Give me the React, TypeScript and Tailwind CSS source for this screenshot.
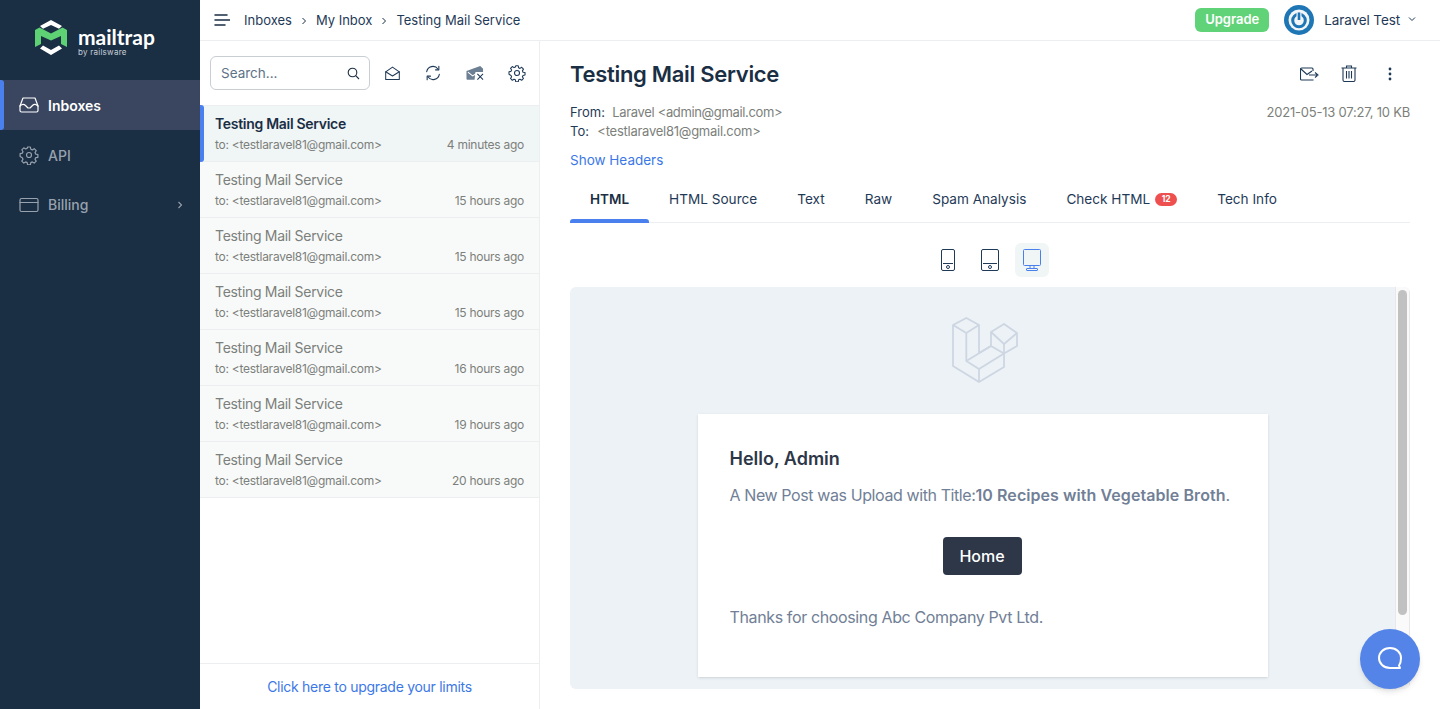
import { ReactNode } from "react";

const FONT = "font-['Inter','Liberation_Sans',sans-serif]";

const messages = [
  { time: "4 minutes ago", active: true },
  { time: "15 hours ago" },
  { time: "15 hours ago" },
  { time: "15 hours ago" },
  { time: "16 hours ago" },
  { time: "19 hours ago" },
  { time: "20 hours ago" },
];

const tabs = [
  { label: "HTML", active: true },
  { label: "HTML Source" },
  { label: "Text" },
  { label: "Raw" },
  { label: "Spam Analysis" },
  { label: "Check HTML", badge: "12" },
  { label: "Tech Info" },
];

function Icon({ size = 20, className, children }: { size?: number; className?: string; children: ReactNode }) {
  return (
    <svg width={size} height={size} viewBox="0 0 20 20" fill="none" stroke="currentColor" strokeWidth="1.2" strokeLinecap="round" strokeLinejoin="round" className={className}>
      {children}
    </svg>
  );
}

const GEAR =
  "M8.6 2h2.8l.4 2.2 1.5.7 1.9-1.2 2 2-1.2 1.9.7 1.5 2.2.4v2.8l-2.2.4-.7 1.5 1.2 1.9-2 2-1.9-1.2-1.5.7-.4 2.2H8.6l-.4-2.2-1.5-.7-1.9 1.2-2-2 1.2-1.9-.7-1.5L1.1 11.4V8.6l2.2-.4.7-1.5-1.2-1.9 2-2 1.9 1.2 1.5-.7z";

function Logo() {
  return (
    <div className="flex h-20 items-start pt-5 pl-[35px]">
      <svg width="32" height="35" viewBox="0 0 32 35" fill="none">
        <path d="M16 0 27 6 24 8.800 16 5 8 8.800 5 6z" fill="#fff" />
        <path d="M5 28.500 8 25.500 16 30 24 25.500 27 28.500 16 35z" fill="#fff" />
        <path d="M0 10 4.500 7.500 16 13.500 27.500 7.500 32 10V27L26 24V16L16 20.500 6 16V24L0 27z" fill="#5fd175" />
      </svg>
      <div className="mt-[6px] ml-[11px] flex flex-col">
        <span className="font-['Lato',sans-serif] text-[21px] leading-[22px] font-bold text-white">mailtrap</span>
        <span className="text-[8px] leading-[9px] tracking-[0.25px] text-[#c9d0d8]">by railsware</span>
      </div>
    </div>
  );
}

function Sidebar() {
  return (
    <aside className="flex w-[200px] shrink-0 flex-col bg-[#1a2e44]">
      <Logo />
      <div className="relative flex h-[50px] items-center bg-[#3a4560] pl-[19px] text-white">
        <span className="absolute top-0 left-0 h-full w-1 rounded-r-[3px] bg-[#4a80ee]" />
        <Icon>
          <path d="M1 11V15.500A1.500 1.500 0 0 0 2.500 17H17.500A1.500 1.500 0 0 0 19 15.500V11L16 3H4z" />
          <path d="M1 11 C3 9 5 9 6.500 10.500 L9 13H11L13.500 10.500C15 9 17 9 19 11" />
        </Icon>
        <span className="mt-px ml-[9px] text-sm font-semibold">Inboxes</span>
      </div>
      <div className="flex h-[50px] items-center pl-[19px] text-[#98a2ae]">
        <Icon>
          <path d={GEAR} />
          <circle cx="10" cy="10" r="2.500" />
        </Icon>
        <span className="mt-px ml-[9px] text-sm font-medium">API</span>
      </div>
      <div className="flex h-[49px] items-center pr-[15px] pl-[19px] text-[#98a2ae]">
        <Icon>
          <rect x="1" y="3.500" width="18" height="13" rx="1.500" />
          <path d="M1 7.500H19" />
        </Icon>
        <span className="ml-[9px] flex-1 text-sm font-medium">Billing</span>
        <svg width="10" height="10" viewBox="0 0 10 10" fill="none" stroke="currentColor" strokeWidth="1.1">
          <path d="M3.500 2 6.500 5 3.500 8" />
        </svg>
      </div>
    </aside>
  );
}

function Chevron() {
  return (
    <svg width="8" height="8" viewBox="0 0 8 8" fill="none" stroke="#1a2e44" strokeWidth="1">
      <path d="M2.500 1 5.500 4 2.500 7" />
    </svg>
  );
}

function TopBar() {
  return (
    <header className="flex h-[41px] shrink-0 items-center border-b border-[#eceef0] pr-[24px] pl-[14px] text-[#1f3a57]">
      <svg width="16" height="12" viewBox="0 0 16 12" stroke="#1a2e44" strokeWidth="1.5" strokeLinecap="round">
        <path d="M1 1H13M1 6H16M1 11H11" />
      </svg>
      <nav className="mt-px ml-[14px] flex items-center text-[13px]">
        <span>Inboxes</span>
        <span className="mx-[8px] flex w-2 justify-center"><Chevron /></span>
        <span>My Inbox</span>
        <span className="mx-[8px] flex w-2 justify-center"><Chevron /></span>
        <span>Testing Mail Service</span>
      </nav>
      <span className="ml-auto flex h-6 w-[74px] items-center justify-center rounded-md bg-[#60d277] text-[13px] font-semibold text-white">Upgrade</span>
      <svg width="30" height="30" viewBox="0 0 30 30" fill="none" className="ml-[15px]">
        <circle cx="15" cy="15" r="15" fill="#1f76b5" />
        <circle cx="15" cy="15" r="10.5" fill="#f2f6f8" />
        <circle cx="15" cy="15.5" r="6.3" stroke="#1f76b5" strokeWidth="3" />
        <path d="M15 7.500V14.500" stroke="#f2f6f8" strokeWidth="5" />
        <path d="M15 7.500V15" stroke="#1f76b5" strokeWidth="2.6" />
      </svg>
      <span className="ml-[10px] text-[13.5px] tracking-[-0.1px]">Laravel Test</span>
      <svg width="8" height="6" viewBox="0 0 8 6" fill="none" stroke="#1f3a57" strokeWidth="1" className="mb-[3px] ml-[8px]">
        <path d="M1 1.500 4 4.500 7 1.500" />
      </svg>
    </header>
  );
}

function MessageList() {
  return (
    <section className="flex w-[340px] shrink-0 flex-col border-r border-[#eceef0]">
      <div className="flex h-[65px] shrink-0 items-center border-b border-[#eceef0] pl-[10px]">
        <div className="flex h-[34px] w-[160px] items-center justify-between rounded-md border border-[#c9ced3] pr-[9px] pl-[10px] text-[13.5px] text-[#5d7288]">
          <span>Search...</span>
          <svg width="13" height="13" viewBox="0 0 13 13" fill="none" stroke="#1a2e44" strokeWidth="1.1">
            <circle cx="5.500" cy="5.500" r="4.300" />
            <path d="M8.700 8.700 12 12" />
          </svg>
        </div>
        <div className="ml-[14px] flex items-center text-[#1f3a57]">
          <Icon size={17}>
            <path d="M2 8 10 2.500 18 8V17H2z" />
            <path d="M2 8 10 13 18 8" />
          </Icon>
          <Icon size={18} className="ml-[23px]">
            <path d="M3 8.500A7 7 0 0 1 15.500 5.500" />
            <path d="M17 11.500A7 7 0 0 1 4.500 14.500" />
            <path d="M16.500 2.500V6.500H12.800M3.500 17.500V13.500H7.200" />
          </Icon>
          <svg width="18" height="16" viewBox="0 0 19 16" fill="none" className="ml-[24px]">
            <path d="M0.500 6 15 0.500 18 3.500V7H10L9 15H1.500A1 1 0 0 1 .5 14z" fill="#6d7f92" />
            <path d="M2 7 7 11 11 8.500" stroke="#fff" strokeWidth="1.1" />
            <path d="M12 9 18 15M18 9 12 15" stroke="#1f3a57" strokeWidth="1.1" />
          </svg>
          <Icon size={18} className="ml-[24px]">
            <path d={GEAR} />
            <circle cx="10" cy="10" r="2.800" />
          </Icon>
        </div>
      </div>
      {messages.map((m, i) => (
        <div key={i} className={`relative flex h-14 shrink-0 flex-col justify-center border-b border-[#eceef0] px-[15px] ${m.active ? "bg-[#f0f5f6]" : "bg-[#f8faf9]"}`}>
          {m.active && <span className="absolute -top-px left-0 h-[57px] w-1 rounded-r-[3px] bg-[#4a80ee]" />}
          <div className={`text-sm leading-[20px] tracking-[-0.3px] ${m.active ? "font-semibold text-[#1a2e44]" : "text-[#7c7f7b]"}`}>Testing Mail Service</div>
          <div className="mt-[2px] flex justify-between text-xs leading-[18px] tracking-[-0.26px] text-[#7c7f7b]">
            <span>to: &lt;testlaravel81@gmail.com&gt;</span>
            <span>{m.time}</span>
          </div>
        </div>
      ))}
      <div className="mt-auto flex h-[46px] items-center justify-center border-t border-[#eceef0] text-sm tracking-[-0.28px] text-[#3b78e7]">Click here to upgrade your limits</div>
    </section>
  );
}

function Device({ width, height, bar, active }: { width: number; height: number; bar?: boolean; active?: boolean }) {
  return (
    <div className={`flex h-[34px] w-[34px] items-center justify-center rounded-md ${active ? "bg-[#f0f5f6] text-[#4a80ee]" : "text-[#1f3a57]"}`}>
      {bar ? (
        <svg width={width} height={height} viewBox={`0 0 ${width} ${height}`} fill="none" stroke="currentColor" strokeWidth="1">
          <rect x=".5" y=".5" width={width - 1} height={height - 6} rx="1" />
          <path d={`M${width / 2 - 2} ${height - 5.5}V${height - 3}M${width / 2 + 2} ${height - 5.5}V${height - 3}`} />
          <rect x="3.500" y={height - 2.5} width={width - 7} height="2" rx=".5" />
        </svg>
      ) : (
        <svg width={width} height={height} viewBox={`0 0 ${width} ${height}`} fill="none" stroke="currentColor" strokeWidth="1">
          <rect x=".5" y=".5" width={width - 1} height={height - 1} rx="1.5" />
          <path d={`M2 ${height - 7.5}H${width - 2}`} />
          <circle cx={width / 2} cy={height - 4} r="1.5" />
        </svg>
      )}
    </div>
  );
}

function LaravelMark() {
  return (
    <svg width="66" height="66" viewBox="-1 0 66 66" fill="none" stroke="#cdd6e1" strokeWidth="1.8" strokeLinejoin="round" className="mx-auto block">
      <path d="M0 8 13.300 1 26 8V36L38 29V15L51 7 64 16V29L51 36.500V50L26 65 0 49z" />
      <path d="M0 8 13.300 16 26 8M13.300 16V44L26 52V65M13.300 44 38 29M26 52 51 36.500M38 29 51 36.500M38 15 51 27 64 16M51 27V36.500" />
    </svg>
  );
}

function Detail() {
  return (
    <main className="flex min-w-0 flex-1 flex-col px-[30px]">
      <div className="flex items-start justify-between pt-[17px]">
        <h1 className="text-[22px] leading-[32px] font-semibold tracking-[-0.3px] text-[#1a2e44]">Testing Mail Service</h1>
        <div className="mt-[7px] flex items-center text-[#1f3a57]">
          <svg width="19" height="14" viewBox="0 0 19 14" fill="none" stroke="currentColor" strokeWidth="1.1">
            <path d="M13 12.500V13H1.500A1 1 0 0 1 .5 12V2A1 1 0 0 1 1.500 1H12A1 1 0 0 1 13 2V4" />
            <path d="M1 2 7 7.500 12 4" />
            <path d="M9 8H17M15 5.500 18 8 15 10.500" />
          </svg>
          <svg width="16" height="17" viewBox="0 0 16 17" fill="none" stroke="currentColor" strokeWidth="1.1" className="ml-[22px]">
            <path d="M.5 3H15.500M5.500 3V1H10.500V3M2 3V15A1.500 1.500 0 0 0 3.500 16.500H12.500A1.500 1.500 0 0 0 14 15V3M5.500 6V13.500M8 6V13.500M10.500 6V13.500" />
          </svg>
          <svg width="4" height="14" viewBox="0 0 4 14" fill="currentColor" className="mr-[18px] ml-[31px]">
            <circle cx="2" cy="2" r="1.4" />
            <circle cx="2" cy="7" r="1.4" />
            <circle cx="2" cy="12" r="1.4" />
          </svg>
        </div>
      </div>
      <div className="mt-[13px] flex justify-between text-[13px] leading-[19px] tracking-[-0.22px] text-[#7c7f7b]">
        <div>
          <div><span className="mr-[4px] tracking-normal text-[#1f3a57]">From:</span> <span className="tracking-[-0.35px]">Laravel &lt;admin@gmail.com&gt;</span></div>
          <div><span className="mr-[5px] tracking-normal text-[#1f3a57]">To:</span> <span className="tracking-[-0.25px]">&lt;testlaravel81@gmail.com&gt;</span></div>
        </div>
        <span>2021-05-13 07:27, 10 KB</span>
      </div>
      <div className="mt-[6px] text-[13.5px] leading-[26px] text-[#3b78e7]">Show Headers</div>
      <div className="mt-[9px] flex h-[41px] shrink-0 items-stretch border-b border-[#eceef0] text-[13.6px] text-[#1f3a57]">
        {tabs.map((t) => (
          <div key={t.label} className={`relative flex items-center px-[20px] pb-[5px] ${t.active ? "text-[13.5px] font-semibold text-[#1a2e44]" : ""}`}>
            {t.label}
            {t.badge && <span className="ml-[5px] flex h-[13px] w-[22px] items-center justify-center rounded-full bg-[#ee4f4f] text-[8.5px] font-bold text-white">{t.badge}</span>}
            {t.active && <span className="absolute right-0 -bottom-px left-0 h-1 rounded-t-[3px] bg-[#4a80ee]" />}
          </div>
        ))}
      </div>
      <div className="mt-[20px] mb-[10px] flex shrink-0 items-center justify-center">
        <Device width={14} height={22} />
        <div className="w-2" />
        <Device width={18} height={22} />
        <div className="w-2" />
        <Device width={18} height={22} bar active />
      </div>
      <div className="mb-5 flex min-h-0 flex-1 overflow-hidden rounded-md bg-[#edf2f7]">
        <div className="flex min-w-0 flex-1 flex-col items-center overflow-hidden pt-[30px]">
          <div className="w-full pl-[5px]"><LaravelMark /></div>
          <div className="mt-[31px] w-[570px] shrink-0 bg-white px-8 pt-[32px] pb-[48px] shadow-sm">
            <h2 className="text-[18px] leading-[26px] font-semibold text-[#2d3748]">Hello, Admin</h2>
            <p className="mt-[11px] text-base leading-[24px] tracking-[-0.4px] whitespace-nowrap text-[#718096]">
              A New Post was Upload with Title:<b className="font-semibold tracking-[0.07px]">10 Recipes with Vegetable Broth</b>.
            </p>
            <div className="mt-[30px] flex justify-center pr-px">
              <span className="flex h-[38px] w-[79px] items-center justify-center rounded-[4px] bg-[#2d3748] text-base font-medium text-white">Home</span>
            </div>
            <p className="mt-[30px] text-base leading-[24px] tracking-[-0.37px] text-[#718096]">Thanks for choosing Abc Company Pvt Ltd.</p>
          </div>
        </div>
        <div className="w-[15px] shrink-0 border-x border-[#e8e8e8] bg-[#fafafa] px-[2px] pt-[3px]">
          <div className="h-[325px] rounded-full bg-[#c1c1c1]" />
        </div>
      </div>
    </main>
  );
}

export default function App() {
  return (
    <div className={`relative flex h-[709px] w-[1440px] overflow-hidden bg-white ${FONT}`}>
      <Sidebar />
      <div className="flex min-w-0 flex-1 flex-col">
        <TopBar />
        <div className="flex min-h-0 flex-1">
          <MessageList />
          <Detail />
        </div>
      </div>
      <div className="absolute right-5 bottom-5 flex h-[60px] w-[60px] items-center justify-center rounded-full bg-[#5484e8] shadow-md">
        <svg width="26" height="26" viewBox="0 0 26 26" fill="none" stroke="#fff" strokeWidth="2" strokeLinejoin="round">
          <path d="M13 2C6.500 2 2 6.500 2 12C2 17.500 6.500 22 13 22H23L22 19.500C24 17 24 15 24 12C24 6.500 19.500 2 13 2Z" />
        </svg>
      </div>
    </div>
  );
}
